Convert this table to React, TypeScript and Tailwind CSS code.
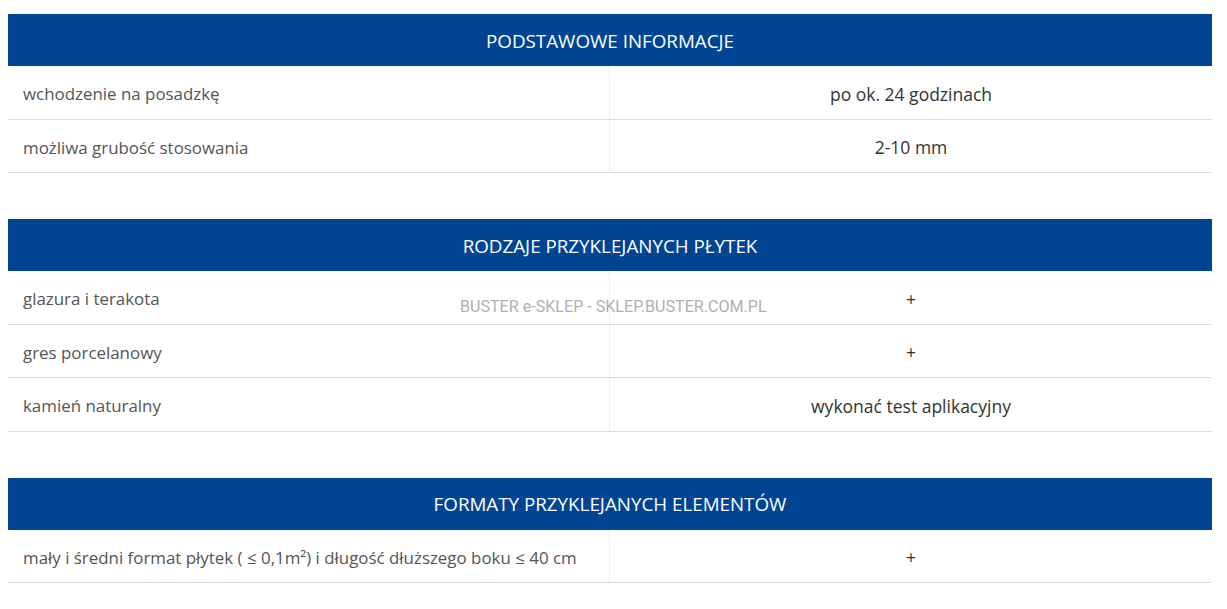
const sections: Array<{ title: string; rows: Array<[string, string]> }> = [
    {
        title: 'PODSTAWOWE INFORMACJE',
        rows: [
            ['wchodzenie na posadzkę', 'po ok. 24 godzinach'],
            ['możliwa grubość stosowania', '2-10 mm'],
        ],
    },
    {
        title: 'RODZAJE PRZYKLEJANYCH PŁYTEK',
        rows: [
            ['glazura i terakota', '+'],
            ['gres porcelanowy', '+'],
            ['kamień naturalny', 'wykonać test aplikacyjny'],
        ],
    },
    {
        title: 'FORMATY PRZYKLEJANYCH ELEMENTÓW',
        rows: [['mały i średni format płytek ( ≤ 0,1m²) i długość dłuższego boku ≤ 40 cm', '+']],
    },
];

export default function App() {
    return (
        <div className="relative min-h-[609px] bg-white px-2 pt-[14px] font-['Open_Sans',sans-serif]">
            <div className="flex w-[1204px] flex-col gap-[46px]">
                {sections.map(section => (
                    <div key={section.title}>
                        <div className="flex h-[52px] items-center justify-center bg-[#004494] pt-[2px] text-[18.8px] text-white">
                            {section.title}
                        </div>
                        {section.rows.map(([label, value]) => (
                            <div key={label} className="grid h-[53.5px] grid-cols-2 border-b border-[#dcdcdc]">
                                <div className="flex items-center border-r border-[#eeeeee] pl-[15px] pt-[3px] text-[16.9px] text-[#555]">{label}</div>
                                <div className="flex items-center justify-center pt-[3px] text-[17.5px] text-[#333]">{value}</div>
                            </div>
                        ))}
                    </div>
                ))}
            </div>
            <div className="pointer-events-none absolute left-[460px] top-[295px] font-['Roboto',sans-serif] text-[16.1px] text-[#b0b0b0]">
                BUSTER e-SKLEP - SKLEP.BUSTER.COM.PL
            </div>
        </div>
    );
}
